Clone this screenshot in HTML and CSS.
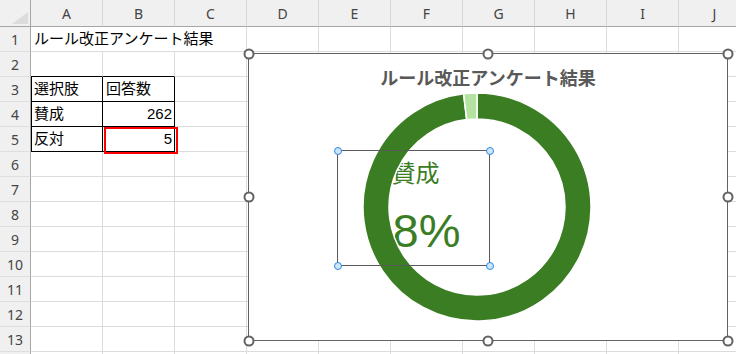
FILE: index.html
```html
<!DOCTYPE html>
<html lang="ja">
<head>
<meta charset="utf-8">
<link rel="stylesheet" href="styles.css">
</head>
<body>
<div class="sheet">
  <div class="corner"><svg width="17" height="13" viewBox="0 0 17 13"><polygon points="16,0 16,12 0,12" fill="#dcdcdc"/></svg></div>
  <div class="colh">A</div><div class="colh">B</div><div class="colh">C</div><div class="colh">D</div><div class="colh">E</div>
  <div class="colh">F</div><div class="colh">G</div><div class="colh">H</div><div class="colh">I</div><div class="colh">J</div>

  <div class="rowh">1</div><div class="cell span3">ルール改正アンケート結果</div><div class="cell"></div><div class="cell"></div><div class="cell"></div><div class="cell"></div><div class="cell"></div><div class="cell"></div><div class="cell"></div>
  <div class="rowh">2</div><div class="cell above"></div><div class="cell above"></div><div class="cell"></div><div class="cell"></div><div class="cell"></div><div class="cell"></div><div class="cell"></div><div class="cell"></div><div class="cell"></div><div class="cell"></div>
  <div class="rowh">3</div><div class="cell tb first">選択肢</div><div class="cell tb">回答数</div><div class="cell"></div><div class="cell"></div><div class="cell"></div><div class="cell"></div><div class="cell"></div><div class="cell"></div><div class="cell"></div><div class="cell"></div>
  <div class="rowh">4</div><div class="cell tb first">賛成</div><div class="cell tb num">262</div><div class="cell"></div><div class="cell"></div><div class="cell"></div><div class="cell"></div><div class="cell"></div><div class="cell"></div><div class="cell"></div><div class="cell"></div>
  <div class="rowh">5</div><div class="cell tb first">反対</div><div class="cell tb num marked">5</div><div class="cell"></div><div class="cell"></div><div class="cell"></div><div class="cell"></div><div class="cell"></div><div class="cell"></div><div class="cell"></div><div class="cell"></div>
  <div class="rowh">6</div><div class="cell"></div><div class="cell"></div><div class="cell"></div><div class="cell"></div><div class="cell"></div><div class="cell"></div><div class="cell"></div><div class="cell"></div><div class="cell"></div><div class="cell"></div>
  <div class="rowh">7</div><div class="cell"></div><div class="cell"></div><div class="cell"></div><div class="cell"></div><div class="cell"></div><div class="cell"></div><div class="cell"></div><div class="cell"></div><div class="cell"></div><div class="cell"></div>
  <div class="rowh">8</div><div class="cell"></div><div class="cell"></div><div class="cell"></div><div class="cell"></div><div class="cell"></div><div class="cell"></div><div class="cell"></div><div class="cell"></div><div class="cell"></div><div class="cell"></div>
  <div class="rowh">9</div><div class="cell"></div><div class="cell"></div><div class="cell"></div><div class="cell"></div><div class="cell"></div><div class="cell"></div><div class="cell"></div><div class="cell"></div><div class="cell"></div><div class="cell"></div>
  <div class="rowh">10</div><div class="cell"></div><div class="cell"></div><div class="cell"></div><div class="cell"></div><div class="cell"></div><div class="cell"></div><div class="cell"></div><div class="cell"></div><div class="cell"></div><div class="cell"></div>
  <div class="rowh">11</div><div class="cell"></div><div class="cell"></div><div class="cell"></div><div class="cell"></div><div class="cell"></div><div class="cell"></div><div class="cell"></div><div class="cell"></div><div class="cell"></div><div class="cell"></div>
  <div class="rowh">12</div><div class="cell"></div><div class="cell"></div><div class="cell"></div><div class="cell"></div><div class="cell"></div><div class="cell"></div><div class="cell"></div><div class="cell"></div><div class="cell"></div><div class="cell"></div>
  <div class="rowh">13</div><div class="cell"></div><div class="cell"></div><div class="cell"></div><div class="cell"></div><div class="cell"></div><div class="cell"></div><div class="cell"></div><div class="cell"></div><div class="cell"></div><div class="cell"></div>
  <div class="rowh"></div><div class="cell"></div><div class="cell"></div><div class="cell"></div><div class="cell"></div><div class="cell"></div><div class="cell"></div><div class="cell"></div><div class="cell"></div><div class="cell"></div><div class="cell"></div>

  <div class="chart">
    <div class="chart-title">ルール改正アンケート結果</div>
    <div class="textbox">
      <div class="tb-text">
        <div class="tb-label">賛成</div>
        <div class="tb-value">98%</div>
      </div>
      <span class="bh tl"></span><span class="bh tr"></span><span class="bh bl"></span><span class="bh br"></span>
    </div>
    <svg class="donut" width="478" height="286" viewBox="0 0 478 286">
      <path d="M228 39 A114 114 0 1 1 214.62 39.79 L217.67 65.61 A88 88 0 1 0 228 65 Z" fill="#3b7d23" stroke="#ffffff" stroke-width="1.5"/>
      <path d="M214.62 39.79 A114 114 0 0 1 228 39 L228 65 A88 88 0 0 0 217.67 65.61 Z" fill="#b4e2a0" stroke="#ffffff" stroke-width="1.5"/>
    </svg>
    <span class="h h-tl"></span><span class="h h-tm"></span><span class="h h-tr"></span>
    <span class="h h-ml"></span><span class="h h-mr"></span>
    <span class="h h-bl"></span><span class="h h-bm"></span><span class="h h-br"></span>
  </div>
</div>
</body>
</html>
```
FILE: styles.css
```css
html, body {
  margin: 0;
  padding: 0;
  background: #ffffff;
  overflow: hidden;
}

.sheet {
  position: relative;
  display: grid;
  grid-template-columns: 31px repeat(10, 72px);
  grid-template-rows: 27px repeat(14, 25px);
  font-family: "Liberation Sans", "Noto Sans CJK JP", sans-serif;
  font-size: 15px;
  color: #000;
}

.corner {
  background: #f0f0f0;
  border-right: 1px solid #a6a6a6;
  border-bottom: 1px solid #a6a6a6;
  box-sizing: border-box;
  display: flex;
  align-items: flex-end;
  justify-content: flex-end;
  padding: 0 1px 1px 0;
}
.corner svg { display: block; }

.colh {
  background: #f0f0f0;
  box-sizing: border-box;
  border-right: 1px solid #d6d6d6;
  border-bottom: 1px solid #a6a6a6;
  color: #444;
  font-family: "Noto Sans", "Liberation Sans", sans-serif;
  font-size: 14px;
  display: flex;
  align-items: center;
  justify-content: center;
}

.rowh {
  background: #f0f0f0;
  box-sizing: border-box;
  border-right: 1px solid #a6a6a6;
  border-bottom: 1px solid #dedede;
  color: #444;
  font-family: "Noto Sans", "Liberation Sans", sans-serif;
  font-size: 14px;
  display: flex;
  align-items: center;
  justify-content: center;
}

.cell {
  box-sizing: border-box;
  border-right: 1px solid #dcdcdc;
  border-bottom: 1px solid #dcdcdc;
  padding: 0 2px 0 3px;
  line-height: 24px;
  white-space: nowrap;
  position: relative;
}
.span3 { grid-column: span 3; }
.above { border-bottom-color: #000; }
.tb { border-right-color: #000; border-bottom-color: #000; }
.first { border-left: 1px solid #000; padding-left: 2px; }
.num { text-align: right; }
.marked::after {
  content: "";
  position: absolute;
  left: 1px;
  top: 0;
  width: 74px;
  height: 27px;
  box-sizing: border-box;
  border: 2px solid #ff0000;
  z-index: 1;
}

.chart {
  position: absolute;
  left: 248px;
  top: 53px;
  width: 480px;
  height: 288px;
  box-sizing: border-box;
  border: 1px solid #626262;
  background: #fff;
  z-index: 2;
}
.chart-title {
  padding-top: 14px;
  text-align: center;
  font-family: "Noto Sans CJK JP", sans-serif;
  font-weight: bold;
  font-size: 18px;
  line-height: 18px;
  color: #595959;
}
.donut {
  position: absolute;
  left: 0;
  top: 0;
  z-index: 2;
}
.textbox {
  position: absolute;
  left: 88px;
  top: 96px;
  width: 153px;
  height: 116px;
}
.textbox::after {
  content: "";
  position: absolute;
  inset: 0;
  border: 1px solid #5a5a5a;
  z-index: 3;
}
.tb-text {
  position: relative;
  z-index: 1;
  display: flex;
  flex-direction: column;
  align-items: center;
  padding-top: 10px;
  color: #3b7d23;
}
.tb-label {
  font-family: "Noto Sans CJK JP", sans-serif;
  font-size: 24px;
  line-height: 24px;
  padding-left: 4px;
}
.tb-value {
  font-family: "Liberation Sans", sans-serif;
  font-size: 47px;
  line-height: 47px;
  margin-top: 23px;
}
.bh {
  position: absolute;
  width: 8px;
  height: 8px;
  box-sizing: border-box;
  border-radius: 50%;
  background: #cde5f8;
  border: 1px solid #2e8ae3;
  transform: translate(-50%, -50%);
  z-index: 4;
}
.bh.tl { left: 0.5px; top: 0.5px; }
.bh.tr { left: calc(100% - 0.5px); top: 0.5px; }
.bh.bl { left: 0.5px; top: calc(100% - 0.5px); }
.bh.br { left: calc(100% - 0.5px); top: calc(100% - 0.5px); }

.h {
  position: absolute;
  width: 11px;
  height: 11px;
  box-sizing: border-box;
  border-radius: 50%;
  background: #fff;
  border: 2px solid #626262;
  transform: translate(-50%, -50%);
  z-index: 5;
}
.h-tl { left: -0.5px; top: -0.5px; }
.h-tm { left: 50%; top: -0.5px; }
.h-tr { left: calc(100% + 0.5px); top: -0.5px; }
.h-ml { left: -0.5px; top: 50%; }
.h-mr { left: calc(100% + 0.5px); top: 50%; }
.h-bl { left: -0.5px; top: calc(100% + 0.5px); }
.h-bm { left: 50%; top: calc(100% + 0.5px); }
.h-br { left: calc(100% + 0.5px); top: calc(100% + 0.5px); }
```
